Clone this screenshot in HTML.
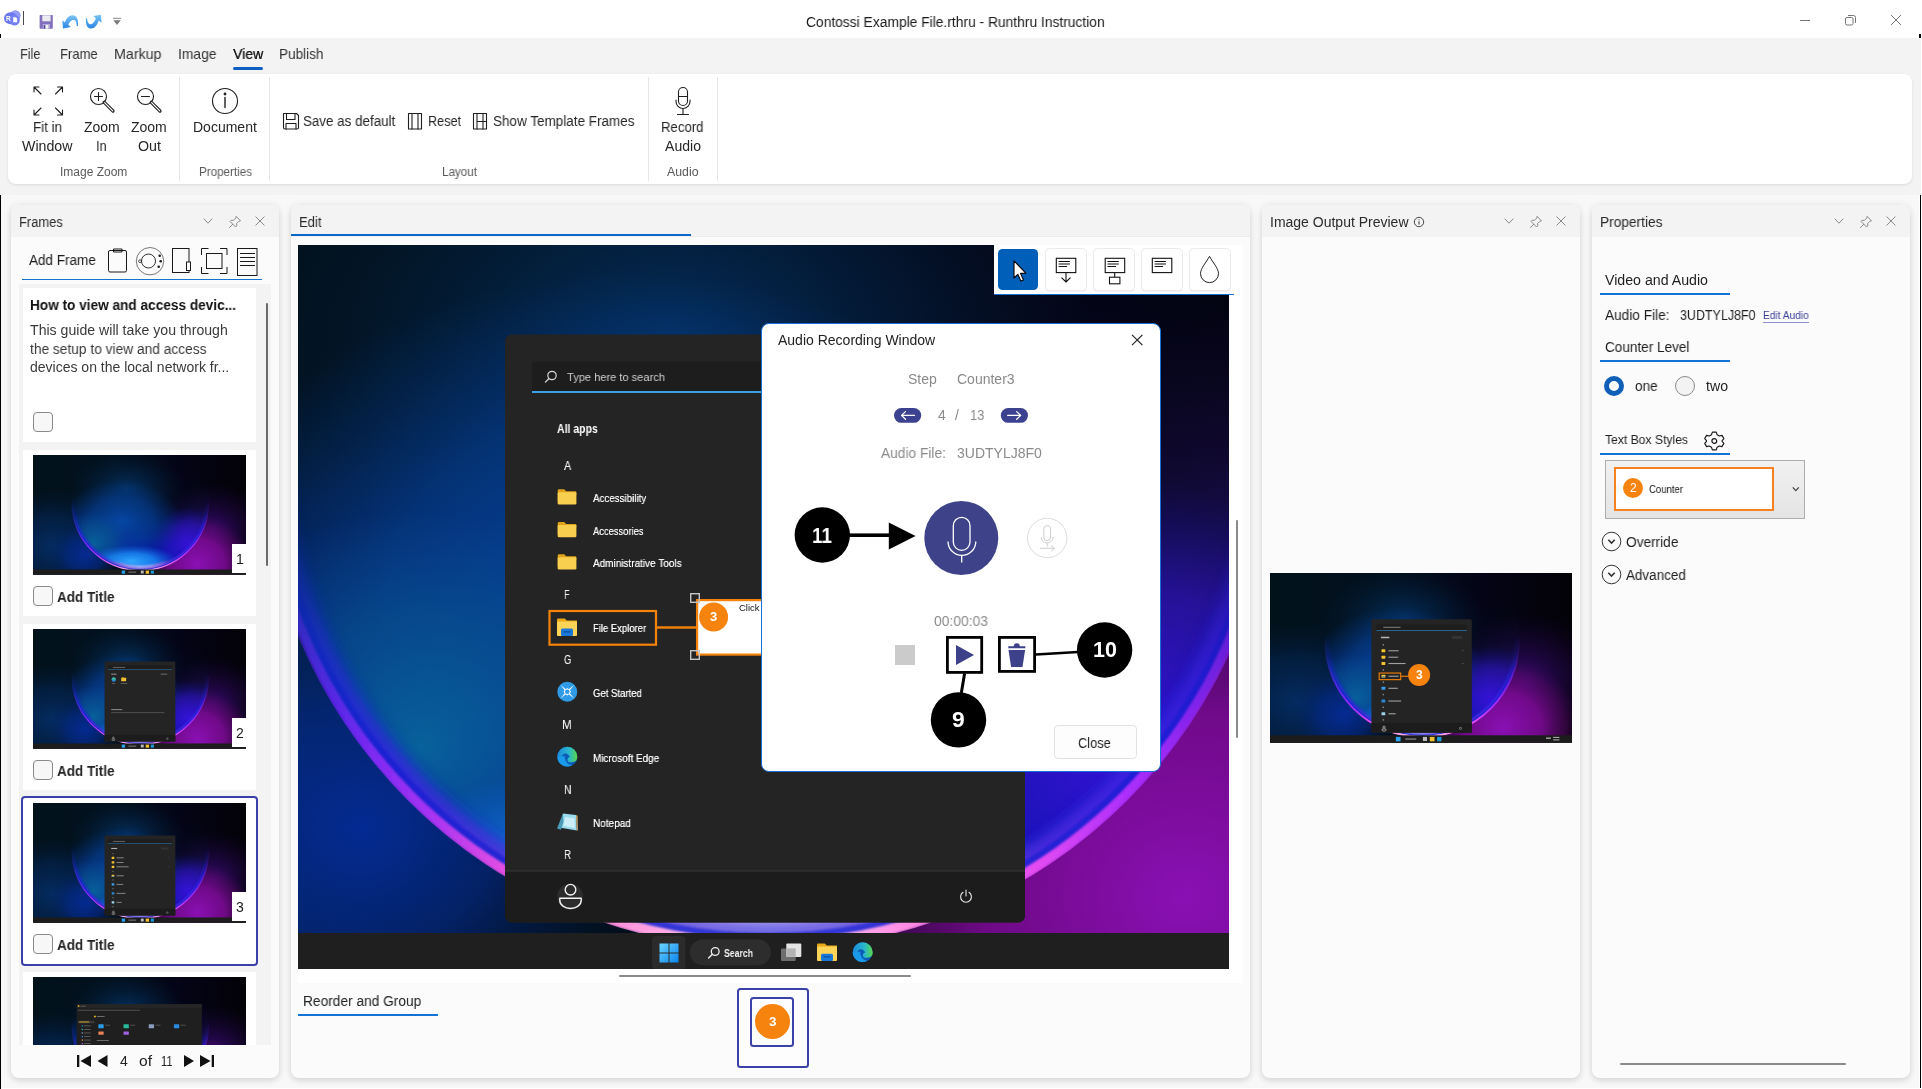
<!DOCTYPE html>
<html lang="en"><head><meta charset="utf-8"><title>Runthru Instruction</title>
<style>
html,body{margin:0;padding:0;}
body{width:1922px;height:1089px;overflow:hidden;position:relative;background:#f8f8f8;font-family:"Liberation Sans",sans-serif;}
body div,body span.t,body svg{position:absolute;}
span.t{white-space:nowrap;line-height:normal;transform-origin:0 50%;will-change:transform;}
svg{overflow:visible;}
.panel{background:#fbfbfb;border-radius:8px;box-shadow:0 3px 6px rgba(0,0,0,.10),0 0 8px rgba(0,0,0,.07);}
.phead{background:#f3f3f3;border-radius:8px 8px 0 0;}
.card{background:#fff;}
.cb{width:18px;height:18px;border:1px solid #8a8a8a;border-radius:4px;background:#f7f7f7;}

</style></head>
<body>
<div style="left:0px;top:0px;width:1921px;height:38px;background:#fff;"></div><div style="left:0px;top:38px;width:1921px;height:157px;background:#f3f3f3;"></div><div style="left:1921px;top:0px;width:1px;height:1089px;background:#fff;"></div><div style="left:0px;top:1088px;width:1922px;height:1px;background:#fff;"></div><div style="left:0px;top:34px;width:1px;height:4px;background:#000;"></div><div style="left:0px;top:195px;width:1px;height:894px;background:#000;"></div><div style="left:1919px;top:34px;width:2px;height:4px;background:#000;"></div><div style="left:1919px;top:195px;width:1px;height:894px;background:#fff;"></div><div style="left:1920px;top:195px;width:1.2px;height:893px;background:#000;"></div><span class="t" style="top:14.33px;font-size:14px;color:#1a1a1a;left:806.30px;transform:scaleX(0.9868);">Contossi Example File.rthru - Runthru Instruction</span><svg style="left:0;top:0" width="140" height="38" viewBox="0 0 140 38">
<defs><linearGradient id="qab" x1="0" y1="0" x2="0" y2="1"><stop offset="0" stop-color="#7cc4f6"/><stop offset="1" stop-color="#2a84e2"/></linearGradient></defs>
<circle cx="15.300" cy="15.600" r="5.400" fill="#959dfb"/>
<ellipse cx="10.600" cy="18.200" rx="6.600" ry="6" fill="#6a77ef"/>
<circle cx="14.600" cy="20.200" r="5.200" fill="#7682f3"/>
<path d="M13.200 17.200h2.600l1.300 1.300v3.800h-3.900z" fill="#fff"/>
<rect x="23" y="11" width="1" height="14" fill="#4a4a4a"/>
<path d="M39.600 15.800a.700 .700 0 0 1 .700 -.700h11.800a.700 .700 0 0 1 .700 .700v12.200a.700 .700 0 0 1 -.700 .700h-11.800a.700 .700 0 0 1 -.700 -.700z" fill="#8270be"/>
<rect x="42.300" y="15.300" width="8.300" height="6" fill="#ececf0"/>
<rect x="42.800" y="24" width="7.200" height="4.700" fill="#b8aedc"/>
<rect x="45.600" y="25" width="2.600" height="3.700" fill="#f4f4f4"/><rect x="43.800" y="25" width="1.400" height="3.700" fill="#5c4a96"/>
<path d="M62.300 20.500 L63 28.600 L70.800 27 L68.300 24.800 C69.500 21.500 72 19.500 74.300 20 C76 20.500 76.600 23 76.800 26 L78 26 C78.500 21 77.500 16.500 74 15.500 C70 14.500 66.500 18 65 22.300 Z" fill="url(#qab)"/>
<path d="M101.600 22.800 L100.900 14.700 L93.200 16 L95.800 18.300 C94.500 22 92.500 24.800 90 24.300 C88 23.800 87.300 21 87 18 L85.900 18 C85.500 23 86.500 27.500 90 28.500 C94 29.300 97.300 25.500 98.800 20.600 Z" fill="url(#qab)"/>
<rect x="112.900" y="17.800" width="8.200" height="1" fill="#8a8a8a"/>
<path d="M113.300 20.200h7.400l-3.700 4.800z" fill="#7a7a7a"/>
</svg><span class="t" style="top:14.92px;font-size:6.5px;color:#fff;font-weight:700;left:5.95px;">R</span><svg style="left:1780px;top:0" width="141" height="38" viewBox="0 0 141 38" fill="none" stroke="#767676" stroke-width="1">
<path d="M20 20.5h10"/>
<rect x="65.500" y="17.500" width="7.500" height="7.500" rx="1.500"/>
<path d="M68 15.500h5.500a2 2 0 0 1 2 2v5.500"/>
<path d="M111 15l10 10M121 15l-10 10"/>
</svg><span class="t" style="top:46.38px;font-size:14.5px;color:#333;left:20.00px;transform:scaleX(0.8770);">File</span><span class="t" style="top:46.38px;font-size:14.5px;color:#333;left:60.00px;transform:scaleX(0.8996);">Frame</span><span class="t" style="top:46.38px;font-size:14.5px;color:#333;left:114.00px;transform:scaleX(0.9822);">Markup</span><span class="t" style="top:46.38px;font-size:14.5px;color:#333;left:178.00px;transform:scaleX(0.9550);">Image</span><span class="t" style="top:46.38px;font-size:14.5px;color:#1a1a1a;left:232.50px;transform:scaleX(0.9624);text-shadow:0.3px 0 0 #1a1a1a;">View</span><span class="t" style="top:46.38px;font-size:14.5px;color:#333;left:279.00px;transform:scaleX(0.9356);">Publish</span><div style="left:232.5px;top:67px;width:30px;height:3px;background:#0f5fc2;border-radius:1.5px;"></div><div style="left:8px;top:74px;width:1904px;height:110px;background:#fff;border-radius:8px;box-shadow:0 1px 3px rgba(0,0,0,.10);"></div><div style="left:179px;top:77px;width:1px;height:104px;background:#e6e6e6;"></div><div style="left:269px;top:77px;width:1px;height:104px;background:#e6e6e6;"></div><div style="left:647.5px;top:77px;width:1px;height:104px;background:#e6e6e6;"></div><div style="left:717px;top:77px;width:1px;height:104px;background:#e6e6e6;"></div><span class="t" style="top:119.03px;font-size:14px;color:#262626;left:33.20px;transform:scaleX(0.9557);">Fit in</span><span class="t" style="top:138.13px;font-size:14px;color:#262626;left:22.45px;transform:scaleX(1.0141);">Window</span><span class="t" style="top:119.03px;font-size:14px;color:#262626;left:83.95px;transform:scaleX(0.9917);">Zoom</span><span class="t" style="top:138.13px;font-size:14px;color:#262626;left:96.45px;transform:scaleX(0.8984);">In</span><span class="t" style="top:119.03px;font-size:14px;color:#262626;left:130.95px;transform:scaleX(0.9917);">Zoom</span><span class="t" style="top:138.13px;font-size:14px;color:#262626;left:137.50px;transform:scaleX(1.0187);">Out</span><span class="t" style="top:119.03px;font-size:14px;color:#262626;left:193.45px;transform:scaleX(0.9951);">Document</span><span class="t" style="top:113.03px;font-size:14px;color:#262626;left:303.00px;transform:scaleX(0.9563);">Save as default</span><span class="t" style="top:113.03px;font-size:14px;color:#262626;left:427.50px;transform:scaleX(0.9022);">Reset</span><span class="t" style="top:113.03px;font-size:14px;color:#262626;left:492.50px;transform:scaleX(0.9638);">Show Template Frames</span><span class="t" style="top:119.03px;font-size:14px;color:#262626;left:661.45px;transform:scaleX(0.9415);">Record</span><span class="t" style="top:137.93px;font-size:14px;color:#262626;left:665.00px;transform:scaleX(1.0052);">Audio</span><span class="t" style="top:164.94px;font-size:12px;color:#5a5a5a;left:60.20px;transform:scaleX(0.9947);">Image Zoom</span><span class="t" style="top:164.94px;font-size:12px;color:#5a5a5a;left:198.50px;transform:scaleX(0.9689);">Properties</span><span class="t" style="top:164.94px;font-size:12px;color:#5a5a5a;left:441.50px;transform:scaleX(0.9714);">Layout</span><span class="t" style="top:164.94px;font-size:12px;color:#5a5a5a;left:667.45px;transform:scaleX(1.0260);">Audio</span><svg style="left:0;top:74px" width="740" height="110" viewBox="0 74 740 110" fill="none" stroke="#1f1f1f" stroke-width="1.1" stroke-linecap="round" stroke-linejoin="round">
<!-- fit in window arrows -->
<path d="M34 87l7 7M34 92v-5h5 M62.500 87l-7 7M57.500 87h5v5 M34 115l7-7M34 110v5h5 M62.500 115l-7-7M62.500 110v5h-5"/>
<!-- zoom in -->
<circle cx="98.500" cy="96.500" r="8"/><path d="M94.500 96.500h8M98.500 92.500v8"/>
<path d="M104.300 102.300l8.700 8.700" stroke-width="3.200"/><path d="M104.600 102.600l8.200 8.200" stroke="#fff" stroke-width="1.200"/>
<!-- zoom out -->
<circle cx="145.500" cy="96.500" r="8"/><path d="M141.500 96.500h8"/>
<path d="M151.300 102.300l8.700 8.700" stroke-width="3.200"/><path d="M151.600 102.600l8.200 8.200" stroke="#fff" stroke-width="1.200"/>
<!-- document info -->
<circle cx="225" cy="101" r="12.500"/><path d="M225 97.500v10" stroke-width="1.400"/><circle cx="225" cy="94" r="0.900" fill="#1f1f1f"/>
<!-- save -->
<path d="M283.500 113.500h13l2 2v12a1.500 1.500 0 0 1 -1.500 1.500h-12a1.500 1.500 0 0 1 -1.500 -1.500z"/><path d="M286.500 113.500v6h8.500v-6M286 129v-5.500h10v5.500"/>
<!-- reset -->
<rect x="408.500" y="113.500" width="13" height="15.500"/><path d="M412 113.500v15.500M418 113.500v15.500"/>
<!-- template frames -->
<rect x="473.500" y="113.500" width="13" height="15.500"/><path d="M477 113.500v15.500M483 113.500v15.500M477 121.500h9.500"/>
<!-- mic -->
<rect x="678.500" y="87.500" width="9" height="18" rx="4.500"/><path d="M678.500 96.500h9"/>
<path d="M676 100v1.500a7 7 0 0 0 14 0v-1.500M683 108.500v6M677.500 114.500h11"/>
</svg><div class="panel" style="left:11px;top:205px;width:268px;height:873px;"></div><div class="phead" style="left:11px;top:205px;width:268px;height:32px;"></div><span class="t" style="top:214.33px;font-size:14px;color:#2b2b2b;left:19.00px;transform:scaleX(0.9209);">Frames</span><svg style="left:199px;top:212px" width="80" height="18" viewBox="0 0 80 18" fill="none" stroke="#8a8a8a" stroke-width="1" stroke-linecap="round" stroke-linejoin="round">
<path d="M5 7l4 4.200 4-4.200"/>
<path d="M37.300 4.600l4.200 4.200-1.600 .500-2.300 2.300 .200 2.200-1.200 1.200-5.600-5.600 1.200-1.200 2.200 .200 2.300-2.300zM33.800 12.200l-3.300 3.300"/>
<path d="M56.800 4.800l8.400 8.400M65.200 4.800l-8.400 8.400"/>
</svg><div class="panel" style="left:291px;top:205px;width:959px;height:873px;"></div><div class="phead" style="left:291px;top:205px;width:959px;height:32px;"></div><span class="t" style="top:214.33px;font-size:14px;color:#2b2b2b;left:299.00px;transform:scaleX(0.9326);">Edit</span><div class="panel" style="left:1262px;top:205px;width:318px;height:873px;"></div><div class="phead" style="left:1262px;top:205px;width:318px;height:32px;"></div><span class="t" style="top:214.33px;font-size:14px;color:#2b2b2b;left:1270.00px;">Image Output Preview</span><svg style="left:1500px;top:212px" width="80" height="18" viewBox="0 0 80 18" fill="none" stroke="#8a8a8a" stroke-width="1" stroke-linecap="round" stroke-linejoin="round">
<path d="M5 7l4 4.200 4-4.200"/>
<path d="M37.300 4.600l4.200 4.200-1.600 .500-2.300 2.300 .200 2.200-1.200 1.200-5.600-5.600 1.200-1.200 2.200 .200 2.300-2.300zM33.800 12.200l-3.300 3.300"/>
<path d="M56.800 4.800l8.400 8.400M65.200 4.800l-8.400 8.400"/>
</svg><div class="panel" style="left:1592px;top:205px;width:318px;height:873px;"></div><div class="phead" style="left:1592px;top:205px;width:318px;height:32px;"></div><span class="t" style="top:214.33px;font-size:14px;color:#2b2b2b;left:1600.00px;transform:scaleX(0.9794);">Properties</span><svg style="left:1830px;top:212px" width="80" height="18" viewBox="0 0 80 18" fill="none" stroke="#8a8a8a" stroke-width="1" stroke-linecap="round" stroke-linejoin="round">
<path d="M5 7l4 4.200 4-4.200"/>
<path d="M37.300 4.600l4.200 4.200-1.600 .500-2.300 2.300 .200 2.200-1.200 1.200-5.600-5.600 1.200-1.200 2.200 .200 2.300-2.300zM33.800 12.200l-3.300 3.300"/>
<path d="M56.800 4.800l8.400 8.400M65.200 4.800l-8.400 8.400"/>
</svg><svg style="left:1413px;top:216px" width="12" height="12" viewBox="0 0 12 12" fill="none" stroke="#333" stroke-width="0.9"><circle cx="6" cy="6" r="4.700"/><path d="M6 5.300v3.200" stroke-width="1"/><circle cx="6" cy="3.700" r="0.550" fill="#333" stroke="none"/></svg><div style="left:291px;top:233.8px;width:400px;height:2.2px;background:#0a68c8;"></div><div style="left:690px;top:235.5px;width:560px;height:1px;background:#ececec;"></div><span class="t" style="top:272.13px;font-size:14px;color:#1f1f1f;left:1605.10px;transform:scaleX(1.0124);">Video and Audio</span><div style="left:1600px;top:293px;width:130px;height:2px;background:#1273d4;"></div><span class="t" style="top:307.33px;font-size:14px;color:#1f1f1f;left:1605.10px;transform:scaleX(0.9750);">Audio File:</span><span class="t" style="top:307.33px;font-size:14px;color:#1f1f1f;left:1680.20px;transform:scaleX(0.8902);">3UDTYLJ8F0</span><span class="t" style="top:309.30px;font-size:10.5px;color:#3a3f98;left:1763.30px;transform:scaleX(0.9662);">Edit Audio</span><div style="left:1763.3px;top:322px;width:45.7px;height:1px;background:#8d90c9;"></div><span class="t" style="top:338.93px;font-size:14px;color:#1f1f1f;left:1605.10px;transform:scaleX(0.9682);">Counter Level</span><div style="left:1600px;top:360px;width:130px;height:2px;background:#1273d4;"></div><div style="left:1604px;top:376px;width:10px;height:10px;border:5px solid #0f5fb8;border-radius:50%;background:#fff;"></div><span class="t" style="top:377.53px;font-size:14px;color:#1f1f1f;left:1635.40px;transform:scaleX(0.9718);">one</span><div style="left:1674.8px;top:376.3px;width:18px;height:18px;border:1px solid #8a8a8a;border-radius:50%;background:#f3f3f3;"></div><span class="t" style="top:377.53px;font-size:14px;color:#1f1f1f;left:1706.40px;transform:scaleX(1.0093);">two</span><span class="t" style="top:432.24px;font-size:13px;color:#1f1f1f;left:1605.20px;transform:scaleX(0.9339);">Text Box Styles</span><svg style="left:1702px;top:429px" width="24" height="24" viewBox="-12 -12 24 24" fill="none" stroke="#1a1a1a" stroke-width="1.200" stroke-linejoin="round">
<path d="M-2 -9.300 L2 -9.300 L2.900 -6.600 L5.300 -5.200 L8 -5.900 L10 -2.500 L8.100 -0.400 L8.100 0.400 L10 2.500 L8 5.900 L5.300 5.200 L2.900 6.600 L2 9.300 L-2 9.300 L-2.900 6.600 L-5.300 5.200 L-8 5.900 L-10 2.500 L-8.100 0.400 L-8.100 -0.400 L-10 -2.500 L-8 -5.900 L-5.300 -5.200 L-2.900 -6.600 Z" transform="translate(0.300,0) scale(0.960)"/>
<circle cx="0.300" cy="0" r="2.400"/></svg><div style="left:1600px;top:453px;width:130px;height:2px;background:#1273d4;"></div><div style="left:1605.2px;top:460.2px;width:197.5px;height:57.3px;border:1px solid #adadad;background:linear-gradient(#f1f1f1,#e4e4e4);"></div><div style="left:1614px;top:466.5px;width:156px;height:40.5px;border:2px solid #f5821f;background:#fff;"></div><div style="left:1623px;top:478px;width:20px;height:20px;border-radius:50%;background:#f7830f;"></div><span class="t" style="top:481.44px;font-size:12px;color:#fff;left:1629.66px;">2</span><span class="t" style="top:482.50px;font-size:10.5px;color:#111;left:1648.70px;transform:scaleX(0.9101);">Counter</span><svg style="left:1790px;top:484px" width="12" height="10" viewBox="0 0 12 10" fill="none" stroke="#444" stroke-width="1.300"><path d="M2.800 3.400l3 3.200 3-3.200"/></svg><svg style="left:1601px;top:531.0px" width="21" height="21" viewBox="-10.500 -10.500 21 21" fill="none" stroke="#333"><circle r="9.300" stroke-width="1"/><path d="M-3.200 -1.800l3.200 3.300 3.200-3.300" stroke-width="1.600"/></svg><span class="t" style="top:533.83px;font-size:14px;color:#1f1f1f;left:1625.60px;transform:scaleX(0.9760);">Override</span><svg style="left:1601px;top:564.0px" width="21" height="21" viewBox="-10.500 -10.500 21 21" fill="none" stroke="#333"><circle r="9.300" stroke-width="1"/><path d="M-3.200 -1.800l3.200 3.300 3.200-3.300" stroke-width="1.600"/></svg><span class="t" style="top:566.83px;font-size:14px;color:#1f1f1f;left:1625.60px;transform:scaleX(0.9602);">Advanced</span><div style="left:1620px;top:1062.5px;width:226px;height:2px;background:#8a8a8a;border-radius:1px;"></div><svg style="left:0;top:0" width="0" height="0">
<defs>
<linearGradient id="wbg" x1="0" y1="0" x2="1" y2="0"><stop offset="0" stop-color="#02121b"/><stop offset=".4" stop-color="#02101e"/><stop offset=".7" stop-color="#040416"/><stop offset="1" stop-color="#030207"/></linearGradient>
<radialGradient id="wleft" cx="0.5" cy="0.5" r="0.5"><stop offset="0" stop-color="#042c62"/><stop offset=".55" stop-color="#03224c" stop-opacity=".7"/><stop offset="1" stop-color="#021830" stop-opacity="0"/></radialGradient>
<radialGradient id="wlb" cx="0.5" cy="0.5" r="0.5"><stop offset="0" stop-color="#042c9c" stop-opacity=".9"/><stop offset=".5" stop-color="#04288a" stop-opacity=".6"/><stop offset="1" stop-color="#031c5a" stop-opacity="0"/></radialGradient>
<radialGradient id="wmag" cx="0.5" cy="0.5" r="0.5"><stop offset="0" stop-color="#8a10b4"/><stop offset=".5" stop-color="#7a0a92" stop-opacity=".9"/><stop offset=".8" stop-color="#5a0868" stop-opacity=".5"/><stop offset="1" stop-color="#3a0650" stop-opacity="0"/></radialGradient>
<radialGradient id="wpur" cx="0.5" cy="0.5" r="0.5"><stop offset="0" stop-color="#3c0a78" stop-opacity=".9"/><stop offset="1" stop-color="#1c0640" stop-opacity="0"/></radialGradient>
<radialGradient id="wtopg" cx="0.5" cy="0.5" r="0.5"><stop offset="0" stop-color="#043468" stop-opacity=".9"/><stop offset="1" stop-color="#03203c" stop-opacity="0"/></radialGradient>
<linearGradient id="wsph" gradientUnits="userSpaceOnUse" x1="0" y1="180" x2="0" y2="1041"><stop offset="0" stop-color="#031428" stop-opacity="0"/><stop offset=".3" stop-color="#04183c" stop-opacity=".15"/><stop offset=".5" stop-color="#051c80" stop-opacity=".5"/><stop offset=".7" stop-color="#0618a6" stop-opacity=".9"/><stop offset=".85" stop-color="#0618b0"/><stop offset="1" stop-color="#0a34d0"/></linearGradient>
<radialGradient id="wblue" cx="0.5" cy="0.5" r="0.5"><stop offset="0" stop-color="#064cae" stop-opacity=".9"/><stop offset=".55" stop-color="#05429c" stop-opacity=".62"/><stop offset="1" stop-color="#043888" stop-opacity="0"/></radialGradient>
<radialGradient id="wtl2" cx="0.5" cy="0.5" r="0.5"><stop offset="0" stop-color="#053a50" stop-opacity=".75"/><stop offset="1" stop-color="#042c40" stop-opacity="0"/></radialGradient>
<radialGradient id="wteal" cx="0.5" cy="0.5" r="0.5"><stop offset="0" stop-color="#08709a" stop-opacity=".8"/><stop offset=".55" stop-color="#085c8c" stop-opacity=".5"/><stop offset="1" stop-color="#0a5090" stop-opacity="0"/></radialGradient>
<radialGradient id="wcyan" cx="0.5" cy="0.5" r="0.5"><stop offset="0" stop-color="#30a8ff"/><stop offset=".5" stop-color="#1a8cf4" stop-opacity=".8"/><stop offset="1" stop-color="#1068e0" stop-opacity="0"/></radialGradient>
<radialGradient id="wvio" cx="0.5" cy="0.5" r="0.5"><stop offset="0" stop-color="#3a12dc" stop-opacity=".9"/><stop offset=".6" stop-color="#2a10c0" stop-opacity=".5"/><stop offset="1" stop-color="#1c0a90" stop-opacity="0"/></radialGradient>
<linearGradient id="wrim" gradientUnits="userSpaceOnUse" x1="347" y1="0" x2="1581" y2="0"><stop offset="0" stop-color="#3a20e0"/><stop offset=".08" stop-color="#6a24f4"/><stop offset=".17" stop-color="#a834f2"/><stop offset=".24" stop-color="#e44ee2"/><stop offset=".32" stop-color="#ff80d8"/><stop offset=".42" stop-color="#ffb4e8"/><stop offset=".5" stop-color="#ffc8f0"/><stop offset=".58" stop-color="#ffb0ea"/><stop offset=".68" stop-color="#ff74e2"/><stop offset=".77" stop-color="#e44cf2"/><stop offset=".86" stop-color="#ac2efa"/><stop offset="1" stop-color="#7020e8"/></linearGradient>
<linearGradient id="wrimm" gradientUnits="userSpaceOnUse" x1="0" y1="400" x2="0" y2="1041"><stop offset="0" stop-color="#fff" stop-opacity="0"/><stop offset=".2" stop-color="#fff" stop-opacity=".22"/><stop offset=".45" stop-color="#fff" stop-opacity=".75"/><stop offset=".65" stop-color="#fff"/><stop offset="1" stop-color="#fff"/></linearGradient>
<linearGradient id="wrim2" gradientUnits="userSpaceOnUse" x1="660" y1="0" x2="1280" y2="0"><stop offset="0" stop-color="#ff70d0" stop-opacity="0"/><stop offset=".18" stop-color="#ff8ad8"/><stop offset=".36" stop-color="#f6ccf8"/><stop offset=".5" stop-color="#e6d8ff"/><stop offset=".64" stop-color="#f4c8f8"/><stop offset=".82" stop-color="#ff80e4"/><stop offset="1" stop-color="#f060f0" stop-opacity="0"/></linearGradient>
<linearGradient id="wrimm2" gradientUnits="userSpaceOnUse" x1="0" y1="930" x2="0" y2="1015"><stop offset="0" stop-color="#fff" stop-opacity="0"/><stop offset="1" stop-color="#fff"/></linearGradient>
<mask id="wmask2" maskUnits="userSpaceOnUse" x="0" y="0" width="1920" height="1080"><rect x="0" y="0" width="1920" height="1080" fill="url(#wrimm2)"/></mask>
<mask id="wmask" maskUnits="userSpaceOnUse" x="0" y="0" width="1920" height="1080"><rect x="0" y="0" width="1920" height="1080" fill="url(#wrimm)"/></mask>
<clipPath id="wclip"><circle cx="967" cy="425.500" r="620"/></clipPath>
<clipPath id="wclip2"><circle cx="967" cy="425.500" r="623.500"/></clipPath>
<clipPath id="wall-clip"><rect x="0" y="0" width="1920" height="1080"/></clipPath>
<filter id="wb8" x="-20%" y="-20%" width="140%" height="140%"><feGaussianBlur stdDeviation="9"/></filter>
<filter id="wb3" x="-20%" y="-20%" width="140%" height="140%"><feGaussianBlur stdDeviation="1.600"/></filter>
<g id="wall" clip-path="url(#wall-clip)">
<rect x="0" y="0" width="1920" height="1080" fill="url(#wbg)"/>
<ellipse cx="180" cy="820" rx="640" ry="520" fill="url(#wleft)"/>
<ellipse cx="470" cy="900" rx="330" ry="300" fill="url(#wlb)"/>
<ellipse cx="850" cy="300" rx="520" ry="330" fill="url(#wtopg)"/>
<ellipse cx="1620" cy="680" rx="520" ry="430" fill="url(#wpur)"/>
<ellipse cx="1480" cy="985" rx="500" ry="450" fill="url(#wmag)"/>
<g clip-path="url(#wclip)">
<circle cx="967" cy="425.500" r="620" fill="url(#wsph)"/>
<ellipse cx="1400" cy="800" rx="330" ry="330" fill="url(#wvio)"/>
<ellipse cx="800" cy="600" rx="540" ry="380" fill="url(#wblue)"/>
<ellipse cx="540" cy="800" rx="320" ry="290" fill="url(#wteal)"/>
<ellipse cx="890" cy="960" rx="420" ry="150" fill="url(#wcyan)"/>
</g>
<g mask="url(#wmask2)" clip-path="url(#wclip)"><circle cx="967" cy="425.500" r="596" fill="none" stroke="url(#wrim2)" stroke-width="46" filter="url(#wb8)"/></g>
<g mask="url(#wmask)" clip-path="url(#wclip2)">
<circle cx="967" cy="425.500" r="613" fill="none" stroke="url(#wrim)" stroke-width="34" filter="url(#wb8)" opacity=".8"/>
<circle cx="967" cy="425.500" r="600" fill="none" stroke="#0a24d8" stroke-width="20" filter="url(#wb8)" opacity=".75"/>
<circle cx="967" cy="425.500" r="607" fill="none" stroke="#0a1cd0" stroke-width="8" filter="url(#wb3)" opacity=".7"/>
<circle cx="967" cy="425.500" r="617" fill="none" stroke="url(#wrim)" stroke-width="11.500" filter="url(#wb3)"/>
</g>
</g>
</defs></svg><span class="t" style="top:252.33px;font-size:14px;color:#1a1a1a;left:29.00px;transform:scaleX(0.9646);">Add Frame</span><div style="left:22px;top:279px;width:240px;height:1.2px;background:#1273d4;"></div><svg style="left:100px;top:240px" width="165" height="40" viewBox="100 240 165 40" fill="none" stroke="#1a1a1a" stroke-width="1">
<rect x="108.500" y="250.500" width="18" height="21.500" rx="1.500"/><rect x="113.500" y="249" width="8.500" height="3" rx="0.800" stroke-width="1.200"/>
<circle cx="150" cy="261.200" r="13.700" stroke="#555" stroke-width="0.800"/><circle cx="148.500" cy="261" r="7" stroke-width="0.900"/><circle cx="140" cy="261.200" r="1.400" stroke-width="0.700"/>
<circle cx="159.700" cy="255.800" r="1.300" fill="#1a1a1a" stroke="none"/><circle cx="160.700" cy="261.200" r="1.300" fill="#1a1a1a" stroke="none"/><circle cx="158.700" cy="266.800" r="1.300" fill="#1a1a1a" stroke="none"/>
<rect x="172.500" y="248.500" width="16.500" height="24"/><rect x="186.500" y="262" width="4" height="8.500" fill="#fff"/>
<path d="M201.500 255v-6.500h7M220 248.500h7v6.500M227 267v6.500h-7M208.500 273.500h-7v-6.500"/><rect x="206.500" y="253.500" width="15.500" height="15"/>
<rect x="237.500" y="248.500" width="19.500" height="27"/><path d="M240 253.500h15M240 257.500h15M240 261.500h15M240 265.500h15"/>
</svg><div style="left:19px;top:284px;width:252px;height:761px;background:#f3f3f3;"></div><div style="left:266px;top:303px;width:2px;height:263px;background:#6a6a6a;border-radius:1px;"></div><div style="left:23px;top:288px;width:233px;height:154px;background:#fff;"></div><span class="t" style="top:297.03px;font-size:14px;color:#111;font-weight:700;left:30.00px;transform:scaleX(0.9733);">How to view and access devic...</span><span class="t" style="top:321.83px;font-size:14px;color:#3a3a3a;left:30.00px;transform:scaleX(1.0086);">This guide will take you through</span><span class="t" style="top:340.53px;font-size:14px;color:#3a3a3a;left:30.00px;transform:scaleX(0.9817);">the setup to view and access</span><span class="t" style="top:359.03px;font-size:14px;color:#3a3a3a;left:30.00px;">devices on the local network fr...</span><div class="cb" style="left:33px;top:412px;"></div><div style="left:23px;top:450px;width:233px;height:166px;background:#fff;"></div><svg style="left:33px;top:455px;overflow:hidden" width="213" height="120" viewBox="0 0 213 120"><g transform="scale(0.11094)"><use href="#wall"/><rect x="0" y="1032" width="1920" height="48" fill="#1c1c1c"/><rect x="800" y="1042" width="30" height="28" fill="#2aa4f0"/><rect x="860" y="1050" width="70" height="12" fill="#666"/><rect x="972" y="1042" width="26" height="26" fill="#bbb"/><rect x="1016" y="1042" width="30" height="28" fill="#f2c230"/><rect x="1062" y="1042" width="28" height="28" fill="#1a9ad8"/></g></svg><div style="left:232px;top:544px;width:14px;height:29px;background:#fff;"></div><span class="t" style="top:550.93px;font-size:14px;color:#1a1a1a;left:236.40px;">1</span><div class="cb" style="left:33px;top:586px;"></div><span class="t" style="top:589.18px;font-size:14.5px;color:#242424;font-weight:700;left:56.80px;transform:scaleX(0.9309);">Add Title</span><div style="left:23px;top:624px;width:233px;height:166px;background:#fff;"></div><svg style="left:33px;top:629px;overflow:hidden" width="213" height="120" viewBox="0 0 213 120"><g transform="scale(0.11094)"><use href="#wall"/><rect x="645" y="294" width="638" height="721" rx="10" fill="#242424"/><rect x="645" y="953" width="638" height="62" fill="#1c1c1c"/><rect x="677" y="327" width="575" height="39" fill="#1e1e1e"/><rect x="677" y="363" width="575" height="4" fill="#2f8fd0"/><rect x="720" y="342" width="110" height="7" fill="#777"/><rect x="705" y="402" width="48" height="10" fill="#8a8a8a"/><rect x="1150" y="402" width="60" height="10" fill="#666"/><circle cx="728" cy="455" r="20" fill="#2a8ad8"/><path d="M710 455a18 18 0 0 1 36 0z" fill="#3cc08a"/><rect x="795" y="440" width="44" height="32" rx="4" fill="#f2c230"/><rect x="800" y="436" width="18" height="8" fill="#d9a520"/><rect x="712" y="488" width="30" height="6" fill="#777"/><rect x="790" y="488" width="60" height="6" fill="#777"/><rect x="705" y="722" width="100" height="9" fill="#8a8a8a"/><rect x="705" y="752" width="480" height="6" fill="#666"/><circle cx="725" cy="980" r="7" fill="none" stroke="#ddd" stroke-width="4"/><path d="M712 992h26v4a13 10 0 0 1 -26 0z" fill="none" stroke="#ddd" stroke-width="4"/><circle cx="1211" cy="988" r="7" fill="none" stroke="#bbb" stroke-width="3.500"/><rect x="0" y="1032" width="1920" height="48" fill="#1c1c1c"/><rect x="800" y="1042" width="30" height="28" fill="#2aa4f0"/><rect x="860" y="1050" width="70" height="12" fill="#666"/><rect x="972" y="1042" width="26" height="26" fill="#bbb"/><rect x="1016" y="1042" width="30" height="28" fill="#f2c230"/><rect x="1062" y="1042" width="28" height="28" fill="#1a9ad8"/></g></svg><div style="left:232px;top:718px;width:14px;height:29px;background:#fff;"></div><span class="t" style="top:724.93px;font-size:14px;color:#1a1a1a;left:236.40px;">2</span><div class="cb" style="left:33px;top:760px;"></div><span class="t" style="top:763.18px;font-size:14.5px;color:#242424;font-weight:700;left:56.80px;transform:scaleX(0.9309);">Add Title</span><div style="left:23px;top:798px;width:233px;height:166px;background:#fff;"></div><svg style="left:33px;top:803px;overflow:hidden" width="213" height="120" viewBox="0 0 213 120"><g transform="scale(0.11094)"><use href="#wall"/><rect x="645" y="294" width="638" height="721" rx="10" fill="#242424"/><rect x="645" y="953" width="638" height="62" fill="#1c1c1c"/><rect x="677" y="327" width="575" height="39" fill="#1e1e1e"/><rect x="677" y="363" width="575" height="4" fill="#2f8fd0"/><rect x="720" y="342" width="110" height="7" fill="#777"/><rect x="705" y="405" width="54" height="10" fill="#b0b0b0"/><rect x="1156" y="400" width="66" height="20" rx="4" fill="#333"/><rect x="709" y="484.5" width="24" height="20" rx="3" fill="#f2c230"/><rect x="753" y="491.0" width="65" height="7" fill="#a0a0a0"/><rect x="709" y="525.5" width="24" height="20" rx="3" fill="#f2c230"/><rect x="753" y="532.0" width="62" height="7" fill="#a0a0a0"/><rect x="709" y="565.5" width="24" height="20" rx="3" fill="#f2c230"/><rect x="753" y="572.0" width="109" height="7" fill="#a0a0a0"/><rect x="709" y="646.5" width="24" height="20" rx="3" fill="#f2c230"/><rect x="753" y="653.0" width="65" height="7" fill="#a0a0a0"/><rect x="709" y="723" width="24" height="20" rx="3" fill="#3a9be8"/><rect x="753" y="729.5" width="60" height="7" fill="#a0a0a0"/><rect x="709" y="804" width="24" height="20" rx="3" fill="#2a8ad8"/><rect x="753" y="810.5" width="81" height="7" fill="#a0a0a0"/><rect x="709" y="885" width="24" height="20" rx="3" fill="#9ad0e8"/><rect x="753" y="891.5" width="46" height="7" fill="#a0a0a0"/><rect x="714" y="657" width="14" height="8" fill="#1a78d8"/><rect x="716" y="452.2" width="9" height="9" fill="#8a8a8a"/><rect x="716" y="611.5" width="9" height="9" fill="#8a8a8a"/><rect x="716" y="689.5" width="9" height="9" fill="#8a8a8a"/><rect x="716" y="768.5" width="9" height="9" fill="#8a8a8a"/><rect x="716" y="849.5" width="9" height="9" fill="#8a8a8a"/><rect x="716" y="929.5" width="9" height="9" fill="#8a8a8a"/><rect x="1222" y="491" width="8" height="5" fill="#666"/><rect x="1222" y="573" width="8" height="5" fill="#666"/><circle cx="725" cy="980" r="7" fill="none" stroke="#ddd" stroke-width="4"/><path d="M712 992h26v4a13 10 0 0 1 -26 0z" fill="none" stroke="#ddd" stroke-width="4"/><circle cx="1211" cy="988" r="7" fill="none" stroke="#bbb" stroke-width="3.500"/><rect x="0" y="1032" width="1920" height="48" fill="#1c1c1c"/><rect x="800" y="1042" width="30" height="28" fill="#2aa4f0"/><rect x="860" y="1050" width="70" height="12" fill="#666"/><rect x="972" y="1042" width="26" height="26" fill="#bbb"/><rect x="1016" y="1042" width="30" height="28" fill="#f2c230"/><rect x="1062" y="1042" width="28" height="28" fill="#1a9ad8"/></g></svg><div style="left:232px;top:892px;width:14px;height:29px;background:#fff;"></div><span class="t" style="top:898.93px;font-size:14px;color:#1a1a1a;left:236.40px;">3</span><div class="cb" style="left:33px;top:934px;"></div><span class="t" style="top:937.18px;font-size:14.5px;color:#242424;font-weight:700;left:56.80px;transform:scaleX(0.9309);">Add Title</span><div style="left:21.3px;top:796.3px;width:232.7px;height:165.7px;border:2px solid #3b41a8;border-radius:4px;"></div><div style="left:23px;top:972px;width:233px;height:73px;background:#fff;"></div><svg style="left:33px;top:977px;overflow:hidden" width="213" height="68" viewBox="0 0 213 68"><g transform="scale(0.11094)"><use href="#wall"/><g transform="translate(-296,-3)"><rect x="690" y="248" width="1128" height="760" rx="8" fill="#1f1f1f"/><rect x="690" y="248" width="1128" height="34" fill="#262626"/><rect x="700" y="258" width="14" height="14" fill="#e0b020"/><rect x="724" y="262" width="50" height="7" fill="#666"/><rect x="700" y="298" width="560" height="10" fill="#4a4a4a"/><rect x="845" y="352" width="18" height="14" fill="#e0b020"/><rect x="872" y="355" width="70" height="8" fill="#777"/><rect x="700" y="398" width="150" height="22" fill="#3a3a3a"/><rect x="712" y="404" width="90" height="9" fill="#c9a227"/><rect x="885" y="430" width="48" height="34" rx="4" fill="#2a9be8"/><rect x="945" y="434" width="46" height="6" fill="#666"/><rect x="1112" y="430" width="48" height="34" rx="4" fill="#2ab89a"/><rect x="1172" y="434" width="46" height="6" fill="#666"/><rect x="1339" y="430" width="48" height="34" rx="4" fill="#8a9cc0"/><rect x="1399" y="434" width="46" height="6" fill="#666"/><rect x="1566" y="430" width="48" height="34" rx="4" fill="#2a8ae0"/><rect x="1626" y="434" width="46" height="6" fill="#666"/><rect x="885" y="494" width="48" height="30" rx="4" fill="#e8805a"/><rect x="1112" y="494" width="48" height="30" rx="4" fill="#a060e0"/><rect x="735" y="438" width="12" height="12" fill="#2a8ae0"/><rect x="756" y="440" width="60" height="7" fill="#666"/><rect x="735" y="470" width="12" height="12" fill="#2ab89a"/><rect x="756" y="472" width="60" height="7" fill="#666"/><rect x="735" y="502" width="12" height="12" fill="#8a9cc0"/><rect x="756" y="504" width="60" height="7" fill="#666"/><rect x="735" y="534" width="12" height="12" fill="#2a8ae0"/><rect x="756" y="536" width="60" height="7" fill="#666"/><rect x="735" y="566" width="12" height="12" fill="#e8805a"/><rect x="756" y="568" width="60" height="7" fill="#666"/><rect x="735" y="598" width="12" height="12" fill="#a060e0"/><rect x="756" y="600" width="60" height="7" fill="#666"/><rect x="870" y="572" width="110" height="8" fill="#777"/></g></g></svg><svg style="left:70px;top:1050px" width="150" height="22" viewBox="70 1050 150 22" fill="#111">
<rect x="77" y="1055" width="2.300" height="12"/><path d="M91 1055v12l-10.500-6z"/>
<path d="M107.500 1055v12l-10-6z"/>
<path d="M184 1055v12l10-6z"/>
<path d="M200 1055v12l10.500-6z"/><rect x="211.700" y="1055" width="2.300" height="12"/>
</svg><span class="t" style="top:1053.13px;font-size:14px;color:#222;left:120.10px;">4</span><span class="t" style="top:1053.13px;font-size:14px;color:#222;left:139.00px;transform:scaleX(1.1123);">of</span><span class="t" style="top:1053.13px;font-size:14px;color:#222;left:161.25px;transform:scaleX(0.7905);">11</span><div style="left:298px;top:245px;width:945px;height:738px;background:#fff;"></div><svg style="left:298px;top:245px;overflow:hidden" width="931" height="724" viewBox="298 245 931 724"><g transform="translate(-21.0,94.2) scale(0.8155)"><use href="#wall"/></g><rect x="298" y="933" width="931" height="36" fill="#1f1f1f"/><rect x="652" y="936" width="33.500" height="33" rx="4" fill="#2b2b2b"/><defs><linearGradient id="wlogo" x1="0" y1="0" x2="1" y2="1"><stop offset="0" stop-color="#6ad4ff"/><stop offset="1" stop-color="#0a86ec"/></linearGradient></defs><path d="M659.500 943.600h9v9h-9zM669.500 943.600h9v9h-9zM659.500 953.600h9v8.800h-9zM669.500 953.600h9v8.800h-9z" fill="url(#wlogo)"/><rect x="689.800" y="939.300" width="81" height="26" rx="13" fill="#2d2d2d"/><circle cx="715.200" cy="951.500" r="3.900" fill="none" stroke="#f0f0f0" stroke-width="1.300"/><path d="M712.400 954.300l-3.800 3.800" stroke="#f0f0f0" stroke-width="1.400" stroke-linecap="round"/><rect x="781" y="948.400" width="14.700" height="12.600" rx="1" fill="#6e6e6e"/><rect x="786.300" y="943.600" width="15" height="13.300" rx="1" fill="#e4e4e4"/><rect x="786.300" y="948.400" width="9.400" height="8.500" fill="#b4b4b4"/><path d="M817 947.6 v-2.8 a1.200 1.200 0 0 1 1.200 -1.200 h6.6 l2 2 h10.2 v3 z" fill="#e8a818"/><rect x="817" y="946.6" width="20" height="14.399999999999999" rx="1" fill="#fcd558"/><rect x="821.0" y="953.7" width="12.0" height="7.3" rx="1.500" fill="#1a78d8"/><rect x="823.4" y="956.1" width="7.2" height="1.500" fill="#0c58b0"/><defs><linearGradient id="eg862" x1="0" y1="0" x2="1" y2="0"><stop offset="0" stop-color="#1a8ae0"/><stop offset=".6" stop-color="#2ab8c8"/><stop offset="1" stop-color="#5ad848"/></linearGradient></defs><circle cx="862.7" cy="952.3" r="10" fill="#0c5cb8"/><path d="M852.7 952.3 a10 10 0 0 1 20 0 c0 4.5 -3.0 5.5 -7.5 5.5 c-3.0 0 -3.0 -5.5 0 -5.0 c-2.0 -5.5 -9.0 -5.5 -9.5 5.0 z" fill="url(#eg862)"/><path d="M852.7 953.3 c1.0 7.0 8.0 11.0 15.0 7.5 c-5.0 -0.5 -7.5 -4.0 -7.5 -9.0 c-4.0 0 -7.0 0.5 -7.5 1.5 z" fill="#1a9ae8"/><rect x="505" y="334.500" width="520" height="588" rx="7" fill="#242424"/><path d="M505 871h520v44.500a7 7 0 0 1 -7 7h-506a7 7 0 0 1 -7 -7z" fill="#1c1c1c"/><rect x="505" y="870.500" width="520" height="1" fill="#363636"/><rect x="532" y="361.500" width="300" height="31.500" rx="3" fill="#1d1d1d"/><rect x="532" y="391" width="300" height="2" fill="#3ba0e6"/><circle cx="552" cy="375.500" r="4.200" fill="none" stroke="#d8d8d8" stroke-width="1.200"/><path d="M549 378.500l-3.600 3.600" stroke="#d8d8d8" stroke-width="1.300" stroke-linecap="round"/><path d="M557.7 502 v-11.500 a1.300 1.300 0 0 1 1.300 -1.300 h5.200 l2 2 h9 a1.200 1.200 0 0 1 1.200 1.200 v2 z" fill="#e0a21a"/><rect x="557.7" y="492.2" width="18.700" height="12.300" rx="1.200" fill="#f8cf4e"/><path d="M557.7 534.7 v-11.500 a1.300 1.300 0 0 1 1.300 -1.300 h5.200 l2 2 h9 a1.200 1.200 0 0 1 1.200 1.200 v2 z" fill="#e0a21a"/><rect x="557.7" y="524.9000000000001" width="18.700" height="12.300" rx="1.200" fill="#f8cf4e"/><path d="M557.7 567 v-11.500 a1.300 1.300 0 0 1 1.300 -1.300 h5.200 l2 2 h9 a1.200 1.200 0 0 1 1.200 1.200 v2 z" fill="#e0a21a"/><rect x="557.7" y="557.2" width="18.700" height="12.300" rx="1.200" fill="#f8cf4e"/><path d="M557 622.5 v-2.8 a1.200 1.200 0 0 1 1.200 -1.200 h6.6 l2 2 h10.2 v3 z" fill="#e8a818"/><rect x="557" y="621.5" width="20" height="14.5" rx="1" fill="#fcd558"/><rect x="561.0" y="628.6" width="12.0" height="7.3" rx="1.500" fill="#1a78d8"/><rect x="563.4" y="631.1" width="7.2" height="1.500" fill="#0c58b0"/><circle cx="567.300" cy="691.700" r="10" fill="#2f9ae6"/><path d="M560.500 685l5.300 4.200 1.500-1.200 1.500 1.200 5.300-4.200 -4.200 5.300 1.200 1.400 -1.200 1.500 4.200 5.300 -5.300-4.200 -1.500 1.200 -1.500-1.200 -5.300 4.200 4.200-5.300 -1.200-1.500 1.200-1.400z" fill="#fff"/><circle cx="567.300" cy="691.700" r="2.300" fill="#2f9ae6"/><defs><linearGradient id="eg567" x1="0" y1="0" x2="1" y2="0"><stop offset="0" stop-color="#1a8ae0"/><stop offset=".6" stop-color="#2ab8c8"/><stop offset="1" stop-color="#5ad848"/></linearGradient></defs><circle cx="567.3" cy="756.7" r="10" fill="#0c5cb8"/><path d="M557.3 756.7 a10 10 0 0 1 20 0 c0 4.5 -3.0 5.5 -7.5 5.5 c-3.0 0 -3.0 -5.5 0 -5.0 c-2.0 -5.5 -9.0 -5.5 -9.5 5.0 z" fill="url(#eg567)"/><path d="M557.3 757.7 c1.0 7.0 8.0 11.0 15.0 7.5 c-5.0 -0.5 -7.5 -4.0 -7.5 -9.0 c-4.0 0 -7.0 0.5 -7.5 1.5 z" fill="#1a9ae8"/><path d="M563 813.500l13 1.500 .800 15.500 -16-2.800z" fill="#9adcec"/><path d="M563 813.500l-6 15 4 1.200 2.500-8z" fill="#4a9cb8"/><path d="M576 815l1.600 .800 .300 14.700 -1.100 0z" fill="#c8a46a"/><path d="M565 817l9.500 1.200 .500 9.800 -11.500-2z" fill="#d8f4fa" opacity=".8"/><circle cx="570.200" cy="896.800" r="13" fill="#2c2c2c"/><circle cx="570.500" cy="889.700" r="5.300" fill="none" stroke="#f4f4f4" stroke-width="1.400"/><path d="M559.800 898.200h21.400v2.300a10.700 8 0 0 1 -21.400 0z" fill="none" stroke="#f4f4f4" stroke-width="1.400" stroke-linejoin="round"/><path d="M963 892.300a5.400 5.400 0 1 0 6 0M966 890v6" fill="none" stroke="#e8e8e8" stroke-width="1.100" stroke-linecap="round"/><rect x="549.500" y="611" width="106.500" height="33.700" fill="none" stroke="#f5820a" stroke-width="2.200"/><rect x="656" y="626.300" width="41" height="2.400" fill="#f5820a"/><rect x="697.100" y="600.100" width="80" height="54.500" fill="#fff" stroke="#f5820a" stroke-width="2.200"/><rect x="690.700" y="593.700" width="8.600" height="8.600" fill="none" stroke="#c4c4c4" stroke-width="1.400"/><rect x="690.700" y="650.700" width="8.600" height="8.600" fill="none" stroke="#c4c4c4" stroke-width="1.400"/><circle cx="713.600" cy="617" r="14.500" fill="#f7830f"/></svg><span class="t" style="top:370.59px;font-size:11.5px;color:#d0d0d0;left:567.00px;transform:scaleX(0.9640);">Type here to search</span><span class="t" style="top:421.54px;font-size:12px;color:#fff;font-weight:700;left:556.70px;transform:scaleX(0.8739);">All apps</span><span class="t" style="top:458.74px;font-size:12px;color:#f2f2f2;left:564.00px;transform:scaleX(0.8982);text-shadow:0 0 .5px rgba(255,255,255,.5);">A</span><span class="t" style="top:588.24px;font-size:12px;color:#f2f2f2;left:564.40px;transform:scaleX(0.7626);text-shadow:0 0 .5px rgba(255,255,255,.5);">F</span><span class="t" style="top:652.64px;font-size:12px;color:#f2f2f2;left:563.70px;transform:scaleX(0.7813);text-shadow:0 0 .5px rgba(255,255,255,.5);">G</span><span class="t" style="top:718.14px;font-size:12px;color:#f2f2f2;left:562.30px;transform:scaleX(0.9700);text-shadow:0 0 .5px rgba(255,255,255,.5);">M</span><span class="t" style="top:783.04px;font-size:12px;color:#f2f2f2;left:563.50px;transform:scaleX(0.8649);text-shadow:0 0 .5px rgba(255,255,255,.5);">N</span><span class="t" style="top:848.14px;font-size:12px;color:#f2f2f2;left:564.00px;transform:scaleX(0.8072);text-shadow:0 0 .5px rgba(255,255,255,.5);">R</span><span class="t" style="top:491.80px;font-size:10.5px;color:#fff;left:593.20px;transform:scaleX(0.9303);text-shadow:0 0 .6px rgba(255,255,255,.75);">Accessibility</span><span class="t" style="top:524.50px;font-size:10.5px;color:#fff;left:593.20px;transform:scaleX(0.8938);text-shadow:0 0 .6px rgba(255,255,255,.75);">Accessories</span><span class="t" style="top:556.80px;font-size:10.5px;color:#fff;left:593.20px;transform:scaleX(0.9508);text-shadow:0 0 .6px rgba(255,255,255,.75);">Administrative Tools</span><span class="t" style="top:621.50px;font-size:10.5px;color:#fff;left:593.20px;transform:scaleX(0.9027);text-shadow:0 0 .6px rgba(255,255,255,.75);">File Explorer</span><span class="t" style="top:686.50px;font-size:10.5px;color:#fff;left:593.20px;transform:scaleX(0.9106);text-shadow:0 0 .6px rgba(255,255,255,.75);">Get Started</span><span class="t" style="top:751.70px;font-size:10.5px;color:#fff;left:593.20px;transform:scaleX(0.9453);text-shadow:0 0 .6px rgba(255,255,255,.75);">Microsoft Edge</span><span class="t" style="top:816.50px;font-size:10.5px;color:#fff;left:593.20px;transform:scaleX(0.9546);text-shadow:0 0 .6px rgba(255,255,255,.75);">Notepad</span><span class="t" style="top:946.64px;font-size:11px;color:#f4f4f4;font-weight:700;left:723.90px;transform:scaleX(0.7901);">Search</span><span class="t" style="top:609.24px;font-size:13px;color:#fff;font-weight:700;left:709.98px;">3</span><span class="t" style="top:603.28px;font-size:9.3px;color:#111;left:738.50px;transform:scaleX(1.0171);">Click</span><div style="left:761px;top:323px;width:397.5px;height:447px;background:#fff;border:1px solid #1a6fd6;border-radius:8px;"></div><span class="t" style="top:331.83px;font-size:14px;color:#222;left:777.90px;">Audio Recording Window</span><svg style="left:1128px;top:331px" width="18" height="18" viewBox="1128 331 18 18" fill="none" stroke="#222" stroke-width="1.200"><path d="M1132 334.800l10.400 10.400M1142.400 334.800l-10.400 10.400"/></svg><span class="t" style="top:371.13px;font-size:14px;color:#8a8a8a;left:907.90px;transform:scaleX(0.9892);">Step</span><span class="t" style="top:371.13px;font-size:14px;color:#8a8a8a;left:956.60px;transform:scaleX(0.9949);">Counter3</span><span class="t" style="top:407.03px;font-size:14px;color:#8a8a8a;left:937.60px;">4</span><span class="t" style="top:407.03px;font-size:14px;color:#8a8a8a;left:955.00px;">/</span><span class="t" style="top:407.03px;font-size:14px;color:#8a8a8a;left:969.70px;transform:scaleX(0.9180);">13</span><span class="t" style="top:445.33px;font-size:14px;color:#8a8a8a;left:880.50px;transform:scaleX(0.9810);">Audio File:</span><span class="t" style="top:445.33px;font-size:14px;color:#8a8a8a;left:956.60px;">3UDTYLJ8F0</span><svg style="left:780px;top:400px" width="380" height="340" viewBox="780 400 380 340">
<rect x="894" y="408" width="27.200" height="14.800" rx="7.400" fill="#3c4290"/><path d="M914.500 415.400h-13M905.500 411.600l-4 3.800 4 3.800" fill="none" stroke="#fff" stroke-width="1.300" stroke-linecap="round" stroke-linejoin="round"/>
<rect x="1000.800" y="408" width="27.200" height="14.800" rx="7.400" fill="#3c4290"/><path d="M1007.700 415.400h13M1016.700 411.600l4 3.800 -4 3.800" fill="none" stroke="#fff" stroke-width="1.300" stroke-linecap="round" stroke-linejoin="round"/>
<circle cx="822.300" cy="535" r="27.700" fill="#000"/>
<rect x="849" y="533.400" width="41" height="3.600" fill="#000"/><path d="M888.800 522.500L915.500 536L888.800 549.500z" fill="#000"/>
<circle cx="961.300" cy="538" r="37" fill="#3e4389"/>
<rect x="953.300" y="517.300" width="16.700" height="33" rx="8.350" fill="none" stroke="#fff" stroke-width="1.300"/>
<path d="M948 541.500a13.900 13.900 0 0 0 27.800 0M961.700 555.400v7" fill="none" stroke="#fff" stroke-width="1.300"/>
<circle cx="1047.200" cy="538" r="19.700" fill="#fff" stroke="#dcdcdc" stroke-width="1"/>
<rect x="1043.800" y="525.500" width="6.800" height="15.200" rx="3.400" fill="none" stroke="#cfcfcf" stroke-width="1"/>
<path d="M1041.200 537a6 6 0 0 0 12 0M1047.200 543v3.500M1040 548.300h14.500M1051 545.300l3.500 3 -3.500 3" fill="none" stroke="#cfcfcf" stroke-width="1"/>
<rect x="895" y="645" width="20" height="20" fill="#cbcbcb"/>
<rect x="947.400" y="637.400" width="34.300" height="35" fill="#fff" stroke="#000" stroke-width="2.800"/><path d="M956 645v20l18-10z" fill="#3c4189"/>
<rect x="999.400" y="637.400" width="35.200" height="34" fill="#fff" stroke="#000" stroke-width="2.800"/>
<path d="M1008.300 646.300h17v2h-17zM1013.800 646.300a3 3 0 0 1 6 0zM1008.500 650h16.600l-2.600 17h-11.400z" fill="#3c4189"/>
<path d="M1036 654.500L1078 652" stroke="#000" stroke-width="2.400"/>
<circle cx="1104.600" cy="650" r="27.700" fill="#000"/>
<path d="M964.600 673.500L961.300 693" stroke="#000" stroke-width="3"/>
<circle cx="958.500" cy="719.900" r="27.700" fill="#000"/>
</svg><span class="t" style="top:523.54px;font-size:21.5px;color:#fff;font-weight:700;left:812.00px;transform:scaleX(0.8797);">11</span><span class="t" style="top:638.44px;font-size:21.5px;color:#fff;font-weight:700;left:1092.80px;transform:scaleX(0.9949);">10</span><span class="t" style="top:708.04px;font-size:21.5px;color:#fff;font-weight:700;left:952.05px;transform:scaleX(1.0611);">9</span><span class="t" style="top:612.93px;font-size:14px;color:#8a8a8a;left:933.90px;transform:scaleX(0.9890);">00:00:03</span><div style="left:1053.5px;top:725.3px;width:81.5px;height:31.5px;border:1px solid #e2e2e2;border-radius:4px;background:#fdfdfd;"></div><span class="t" style="top:734.73px;font-size:14px;color:#222;left:1078.20px;transform:scaleX(0.9163);">Close</span><div style="left:994px;top:245px;width:249px;height:49px;background:#fff;"></div><div style="left:994px;top:294px;width:240px;height:1.3px;background:#1273d4;"></div><div style="left:998px;top:249px;width:40px;height:41px;background:#005fb8;border-radius:4.500px;"></div><div style="left:1045.3px;top:248.3px;width:39.5px;height:41px;background:#fff;border:1px solid #ebebeb;border-radius:4.500px;box-shadow:0 1px 1px rgba(0,0,0,.05);"></div><div style="left:1093.3px;top:248.3px;width:39.5px;height:41px;background:#fff;border:1px solid #ebebeb;border-radius:4.500px;box-shadow:0 1px 1px rgba(0,0,0,.05);"></div><div style="left:1141.3px;top:248.3px;width:39.5px;height:41px;background:#fff;border:1px solid #ebebeb;border-radius:4.500px;box-shadow:0 1px 1px rgba(0,0,0,.05);"></div><div style="left:1189.3px;top:248.3px;width:39.5px;height:41px;background:#fff;border:1px solid #ebebeb;border-radius:4.500px;box-shadow:0 1px 1px rgba(0,0,0,.05);"></div><svg style="left:994px;top:245px" width="240" height="49" viewBox="994 245 240 49" fill="none" stroke="#111" stroke-width="1.100">
<path d="M1014 260.800v17.200l3.900-3.600 2.900 6.600 2.600-1.100 -2.900-6.500 5.300-.300z" fill="#fff" stroke="#000" stroke-width="1.100" stroke-linejoin="round"/>
<rect x="1056.300" y="258.300" width="19.500" height="14.300"/><path d="M1058.600 261.500h11.300M1058.600 264h11.300M1058.600 266.500h8.500" stroke-width="1"/>
<path d="M1066 272.600v9.200M1061.500 277.600l4.500 4.400 4.500-4.400"/>
<rect x="1105.200" y="258.300" width="19.500" height="14.300"/><path d="M1107.500 261.500h11.300M1107.500 264h11.300M1107.500 266.500h8.500" stroke-width="1"/>
<path d="M1114.700 272.600v4.600"/><rect x="1109.500" y="277.200" width="10.400" height="6.600"/>
<rect x="1152.300" y="258.300" width="19.500" height="14.300"/><path d="M1154.600 261.500h11.300M1154.600 264h11.300M1154.600 266.500h8.500" stroke-width="1"/>
<path d="M1209.500 256.300c3 5.800 9 12 9 17.300a9 9 0 0 1 -18 0c0-5.300 6-11.500 9-17.300z" stroke="#222" stroke-width="1"/>
</svg><div style="left:1235.5px;top:520px;width:2px;height:218px;background:#8a8a8a;border-radius:1px;"></div><div style="left:618.5px;top:975px;width:292px;height:2px;background:#8a8a8a;border-radius:1px;"></div><span class="t" style="top:993.23px;font-size:14px;color:#222;left:303.10px;transform:scaleX(0.9806);">Reorder and Group</span><div style="left:298px;top:1014px;width:140px;height:2px;background:#1273d4;"></div><div style="left:736.5px;top:987.5px;width:68.5px;height:76.5px;border:2px solid #3b41a8;border-radius:3.500px;background:#fdfdfd;"></div><div style="left:750.3px;top:996.5px;width:40px;height:46px;border:2px solid #3b41a8;border-radius:3.500px;background:#fdfdfd;"></div><div style="left:754.8px;top:1003.8px;width:35px;height:35px;border-radius:50%;background:#f7830f;"></div><span class="t" style="top:1013.78px;font-size:13.5px;color:#fff;font-weight:700;left:768.54px;">3</span><svg style="left:1270px;top:573px;overflow:hidden" width="302" height="170" viewBox="0 0 302 170"><g transform="scale(0.15729)"><use href="#wall"/><rect x="645" y="294" width="638" height="721" rx="10" fill="#242424"/><rect x="645" y="953" width="638" height="62" fill="#1c1c1c"/><rect x="677" y="327" width="575" height="39" fill="#1e1e1e"/><rect x="677" y="363" width="575" height="4" fill="#2f8fd0"/><rect x="720" y="342" width="110" height="7" fill="#777"/><rect x="705" y="405" width="54" height="10" fill="#b0b0b0"/><rect x="1156" y="400" width="66" height="20" rx="4" fill="#333"/><rect x="709" y="484.5" width="24" height="20" rx="3" fill="#f2c230"/><rect x="753" y="491.0" width="65" height="7" fill="#a0a0a0"/><rect x="709" y="525.5" width="24" height="20" rx="3" fill="#f2c230"/><rect x="753" y="532.0" width="62" height="7" fill="#a0a0a0"/><rect x="709" y="565.5" width="24" height="20" rx="3" fill="#f2c230"/><rect x="753" y="572.0" width="109" height="7" fill="#a0a0a0"/><rect x="709" y="646.5" width="24" height="20" rx="3" fill="#f2c230"/><rect x="753" y="653.0" width="65" height="7" fill="#a0a0a0"/><rect x="709" y="723" width="24" height="20" rx="3" fill="#3a9be8"/><rect x="753" y="729.5" width="60" height="7" fill="#a0a0a0"/><rect x="709" y="804" width="24" height="20" rx="3" fill="#2a8ad8"/><rect x="753" y="810.5" width="81" height="7" fill="#a0a0a0"/><rect x="709" y="885" width="24" height="20" rx="3" fill="#9ad0e8"/><rect x="753" y="891.5" width="46" height="7" fill="#a0a0a0"/><rect x="714" y="657" width="14" height="8" fill="#1a78d8"/><rect x="716" y="452.2" width="9" height="9" fill="#8a8a8a"/><rect x="716" y="611.5" width="9" height="9" fill="#8a8a8a"/><rect x="716" y="689.5" width="9" height="9" fill="#8a8a8a"/><rect x="716" y="768.5" width="9" height="9" fill="#8a8a8a"/><rect x="716" y="849.5" width="9" height="9" fill="#8a8a8a"/><rect x="716" y="929.5" width="9" height="9" fill="#8a8a8a"/><rect x="1222" y="491" width="8" height="5" fill="#666"/><rect x="1222" y="573" width="8" height="5" fill="#666"/><circle cx="725" cy="980" r="7" fill="none" stroke="#ddd" stroke-width="4"/><path d="M712 992h26v4a13 10 0 0 1 -26 0z" fill="none" stroke="#ddd" stroke-width="4"/><circle cx="1211" cy="988" r="7" fill="none" stroke="#bbb" stroke-width="3.500"/><rect x="0" y="1032" width="1920" height="48" fill="#1c1c1c"/><rect x="800" y="1042" width="30" height="28" fill="#2aa4f0"/><rect x="860" y="1050" width="70" height="12" fill="#666"/><rect x="972" y="1042" width="26" height="26" fill="#bbb"/><rect x="1016" y="1042" width="30" height="28" fill="#f2c230"/><rect x="1062" y="1042" width="28" height="28" fill="#1a9ad8"/><rect x="694" y="636" width="137" height="42" fill="none" stroke="#f5820a" stroke-width="7"/><rect x="831" y="653" width="50" height="7" fill="#f5820a"/><circle cx="948" cy="649" r="70" fill="#f7830f"/><rect x="1755" y="1046" width="30" height="8" fill="#bbb"/><rect x="1800" y="1042" width="40" height="6" fill="#bbb"/><rect x="1800" y="1058" width="40" height="6" fill="#bbb"/></g></svg><span class="t" style="top:668.44px;font-size:12px;color:#fff;font-weight:700;left:1415.76px;">3</span>
</body></html>
